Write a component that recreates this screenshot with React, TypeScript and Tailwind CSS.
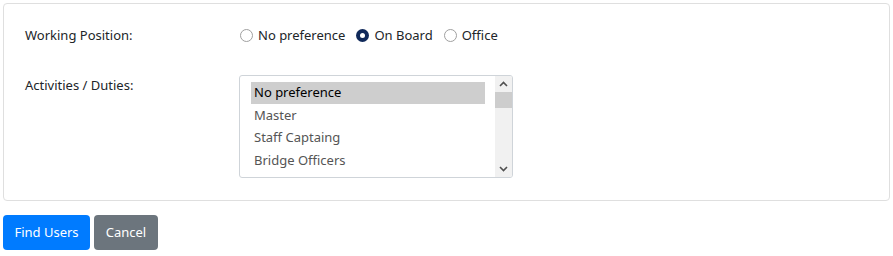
import React from "react";

function Radio({ label, checked }: { label: string; checked?: boolean }) {
  return (
    <label className="flex items-center mr-[5px]">
      {checked ? (
        <span className="w-[13px] h-[13px] rounded-full bg-[#10295a] flex items-center justify-center">
          <span className="w-[5px] h-[5px] rounded-full bg-white" />
        </span>
      ) : (
        <span className="w-[13px] h-[13px] rounded-full border border-[#a0a0a0] bg-white" />
      )}
      <span className="ml-[5px]">{label}</span>
    </label>
  );
}

export default function App() {
  const items = ["No preference", "Master", "Staff Captaing", "Bridge Officers"];
  return (
    <div className="w-[893px] h-[256px] bg-white text-[#212529] text-[13px] font-['Noto_Sans',sans-serif]">
      <div className="pt-[3px] px-[3px]">
        <div className="border border-[#dfdfdf] rounded-[4px] w-[887px] h-[198px] pl-[21px] pt-[21px]">
          <div className="flex items-center h-[21px]">
            <div className="w-[215px]">Working Position:</div>
            <div className="flex items-center gap-[6px]">
              <Radio label="No preference" />
              <Radio label="On Board" checked />
              <Radio label="Office" />
            </div>
          </div>
          <div className="flex mt-[29px]">
            <div className="w-[214px] pt-[1px]">Activities / Duties:</div>
            <div className="w-[274px] h-[103px] border border-[#cfd4d9] rounded-[3px] flex overflow-hidden">
              <div className="flex-1 pl-[11px] pr-[10px] pt-[5.5px]">
                {items.map((it, i) => (
                  <div
                    key={it}
                    className={
                      "h-[22.7px] flex items-center pl-[3px] " +
                      (i === 0 ? "bg-[#cecece] text-black" : "text-[#555]")
                    }
                  >
                    {it}
                  </div>
                ))}
              </div>
              <div className="w-[17px] bg-[#f1f1f1] flex flex-col items-center">
                <div className="h-[16px] flex items-center justify-center">
                  <svg width="9" height="6" viewBox="0 0 9 6">
                    <path d="M1 5 L4.5 1.5 L8 5" stroke="#505050" strokeWidth="1.6" fill="none" />
                  </svg>
                </div>
                <div className="w-[17px] h-[16px] bg-[#cdcdcd]" />
                <div className="flex-1" />
                <div className="h-[16px] flex items-center justify-center">
                  <svg width="9" height="6" viewBox="0 0 9 6">
                    <path d="M1 1 L4.5 4.5 L8 1" stroke="#505050" strokeWidth="1.6" fill="none" />
                  </svg>
                </div>
              </div>
            </div>
          </div>
        </div>
        <div className="flex gap-[4px] mt-[14px]">
          <button className="h-[35px] w-[87px] rounded-[4px] bg-[#007bff] text-white text-[13px]">Find Users</button>
          <button className="h-[35px] w-[64px] rounded-[4px] bg-[#6c757d] text-white text-[13px]">Cancel</button>
        </div>
      </div>
    </div>
  );
}
